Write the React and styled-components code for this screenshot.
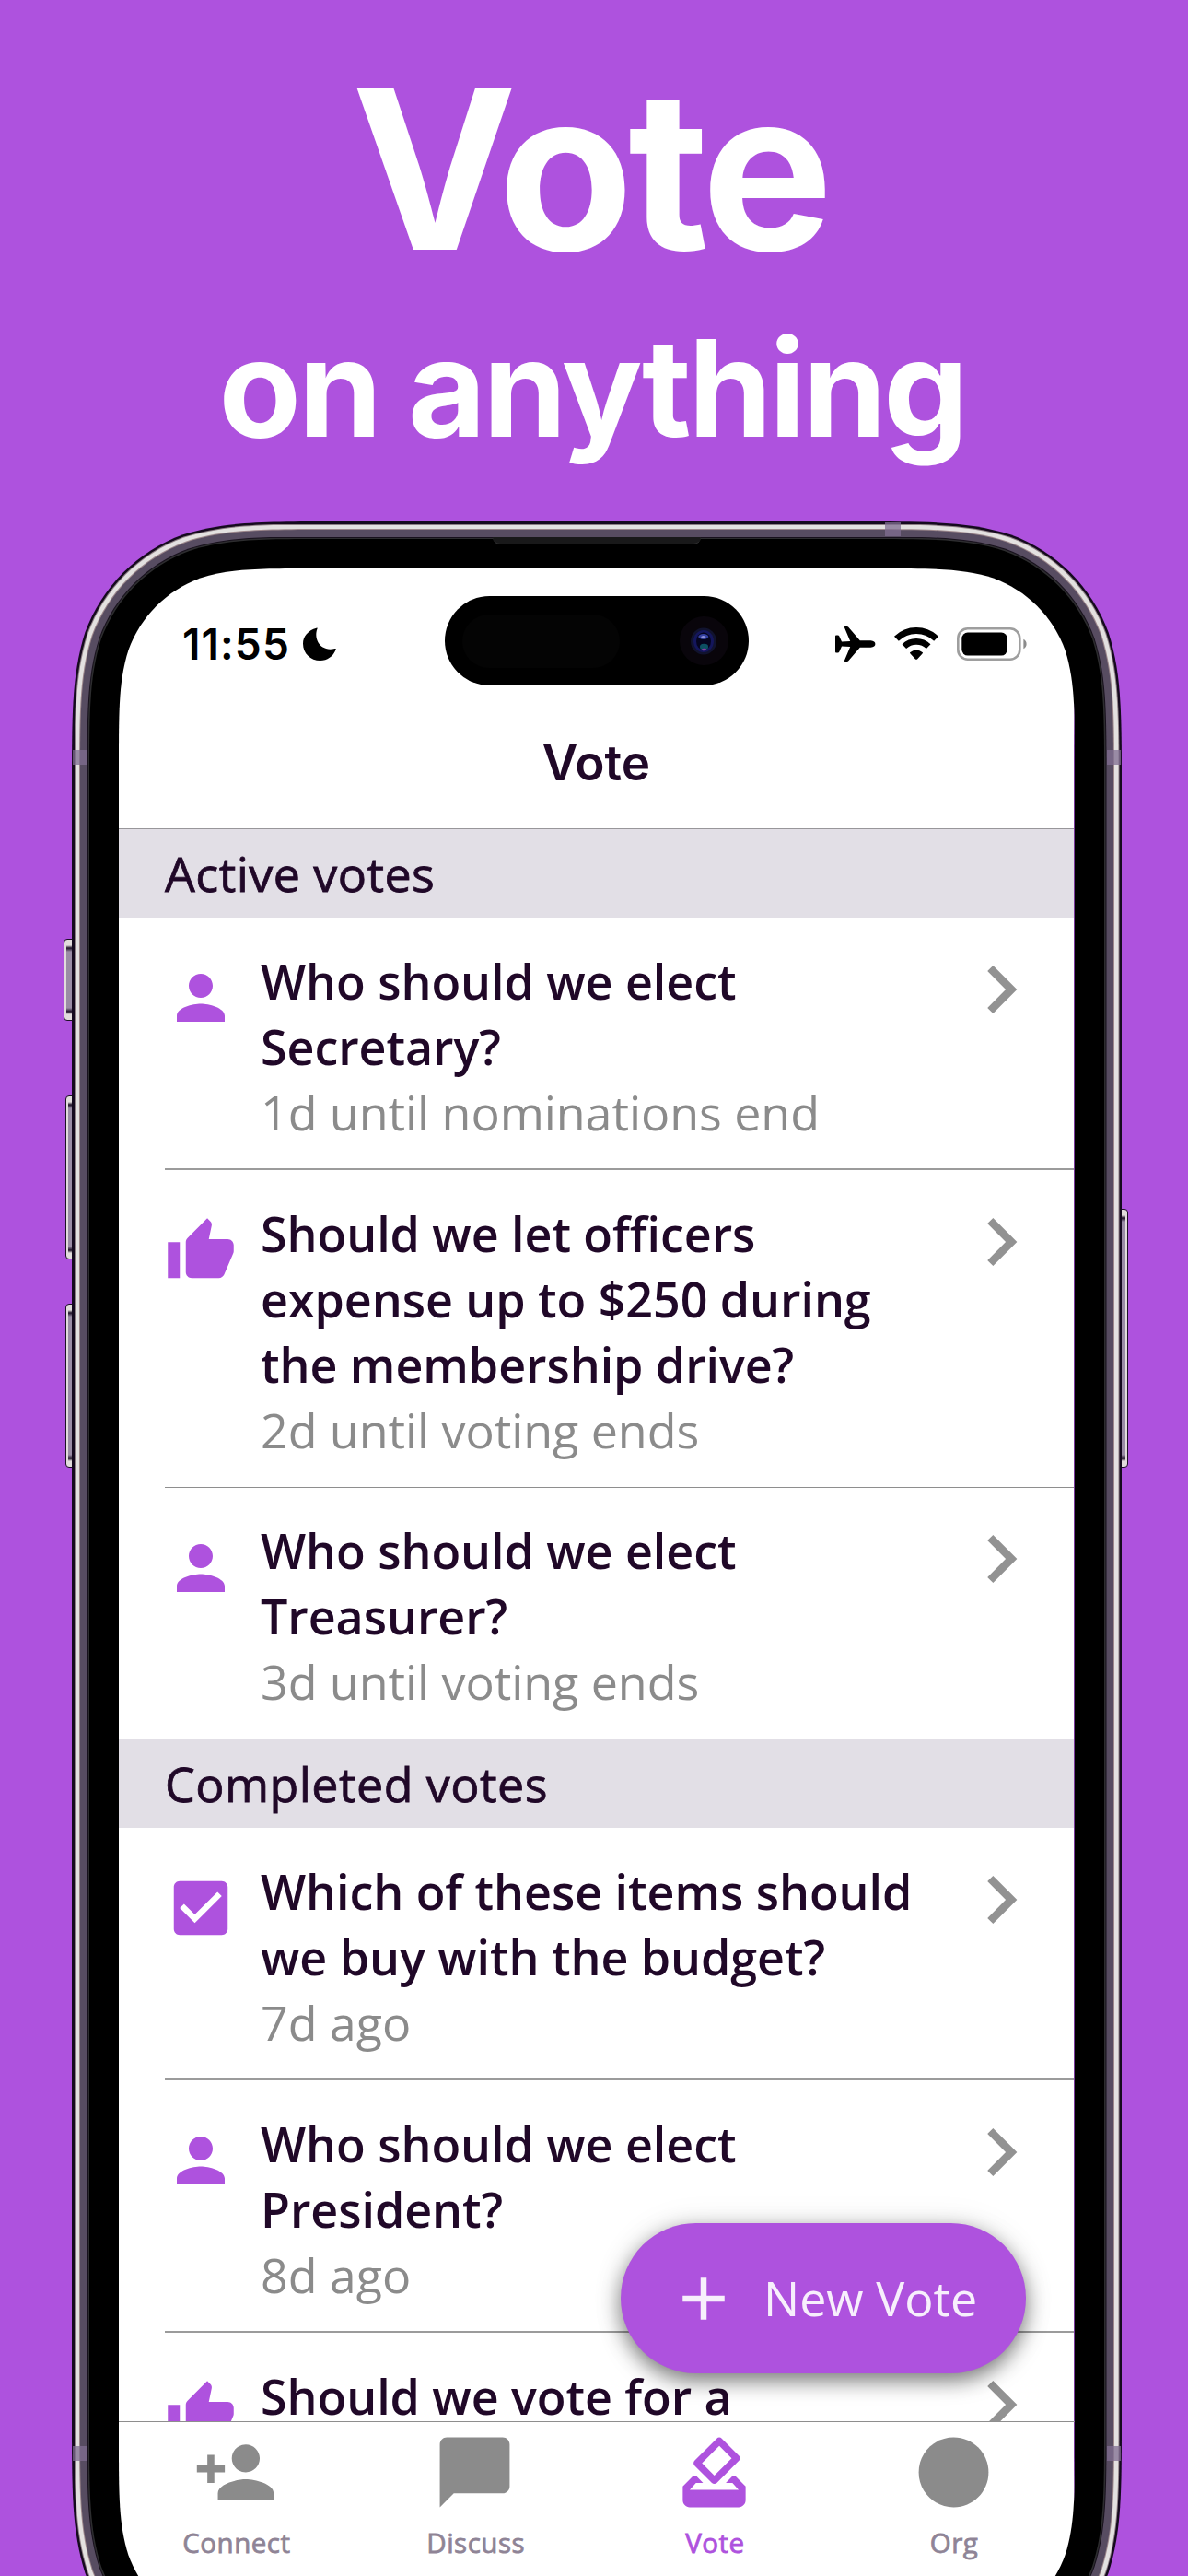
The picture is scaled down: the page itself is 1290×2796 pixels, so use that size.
import React from "react";
import styled, { createGlobalStyle } from "styled-components";

const PURPLE = "#ae52de";
const INK = "#200828";
const GREY = "#8b8b8b";

const Global = createGlobalStyle`
  html, body { margin: 0; padding: 0; background: ${PURPLE}; }
  * { box-sizing: border-box; }
`;

/* Continuous-curvature rounded rectangle, as used for phone corners. */
function squircle(w, h, r) {
  const c = (x, y, fx, fy) =>
    `${(fx ? w - x * r : x * r).toFixed(2)} ${(fy ? h - y * r : y * r).toFixed(2)}`;
  const pts = [
    [0, 1.528665], [0, 1.088493], [0, 0.868407], [0.074912, 0.631494],
    [0.16906, 0.372824], [0.372824, 0.16906], [0.631494, 0.074912],
    [0.868407, 0], [1.088493, 0], [1.528665, 0],
  ];
  const corner = (fx, fy, reverse) => {
    const p = (reverse ? [...pts].reverse() : pts).map(([x, y]) => c(x, y, fx, fy));
    return `${p[0]} C${p[1]} ${p[2]} ${p[3]} C${p[4]} ${p[5]} ${p[6]} C${p[7]} ${p[8]} ${p[9]}`;
  };
  return `M${corner(0, 0, false)} L${corner(1, 0, true)} L${corner(1, 1, false)} L${corner(0, 1, true)} Z`;
}

const PHONE_W = 1140;
const PHONE_H = 2347;
const PHONE_R = 191;

const Page = styled.main`
  width: 1290px;
  height: 2796px;
  overflow: hidden;
  background: ${PURPLE};
  display: flex;
  flex-direction: column;
  align-items: center;
`;

const Hero = styled.header`
  height: 566px;
  flex: none;
  padding-top: 40px;
  display: flex;
  flex-direction: column;
  align-items: center;
  color: #fff;
  font-family: Inter, "Liberation Sans", sans-serif;
  font-weight: 700;
  white-space: nowrap;
`;

const HeroTitle = styled.h1`
  margin: 0 9px 0 0;
  font-size: 240px;
  line-height: 288px;
  letter-spacing: -5.8px;
  font-weight: 700;
`;

const HeroSubtitle = styled.p`
  margin: -2px 4px 0 0;
  font-size: 146px;
  line-height: 190px;
  letter-spacing: -3.2px;
`;

const Phone = styled.div`
  position: relative;
  width: ${PHONE_W}px;
  height: ${PHONE_H}px;
  flex: none;
  margin-left: 6px;
`;

const Ring = styled.div`
  width: ${(p) => PHONE_W - 2 * p.$at}px;
  height: ${(p) => PHONE_H - 2 * p.$at}px;
  padding: ${(p) => p.$pad}px;
  background: ${(p) => p.$color};
  clip-path: path("${(p) => squircle(PHONE_W - 2 * p.$at, PHONE_H - 2 * p.$at, PHONE_R - p.$at)}");
`;

const SideButton = styled.span`
  position: absolute;
  top: ${(p) => p.$top}px;
  height: ${(p) => p.$h}px;
  width: 20px;
  ${(p) => (p.$right ? `right: -7px;` : `left: -${p.$out}px;`)}
  border-radius: 4px;
  border: 1.5px solid #1d1026;
  background: linear-gradient(#e2dcdc 0 6px, #1d1026 9px, #9a8ca5 13px, #9a8ca5 calc(100% - 13px), #1d1026 calc(100% - 9px), #e2dcdc calc(100% - 6px));
  box-shadow: inset ${(p) => (p.$right ? -2 : 2)}px 0 0 #e2dcdc;
`;

const Band = styled.span`
  position: absolute;
  background: #806d91;
  opacity: 0.75;
  ${(p) => p.$pos}
`;

const Speaker = styled.span`
  position: absolute;
  top: 17px;
  left: 457px;
  width: 226px;
  height: 8px;
  background: #19191a;
  border-bottom: 1px solid #353536;
  border-radius: 0 0 8px 8px;
`;

const Screen = styled.section`
  height: 100%;
  border-right: 1px solid #7a3a9c;
  background: #fff;
  display: flex;
  flex-direction: column;
  font-family: "Open Sans", "Noto Sans", sans-serif;
  color: ${INK};
`;

const StatusBar = styled.div`
  height: 150px;
  flex: none;
  display: flex;
  align-items: center;
  padding: 0 50px;
`;

const StatusSide = styled.div`
  flex: 1;
  display: flex;
  align-items: center;
  gap: ${(p) => p.$gap}px;
  padding-top: 14px;
  justify-content: ${(p) => (p.$end ? "flex-end" : "flex-start")};
`;

const Clock = styled.span`
  margin-left: 19px;
  font: 600 46px/54px Inter, sans-serif;
  letter-spacing: 1.1px;
  color: #000;
`;

const Island = styled.div`
  width: 330px;
  height: 97px;
  margin-top: 7px;
  flex: none;
  border-radius: 49px;
  background: #000;
  display: flex;
  align-items: center;
  justify-content: space-between;
  padding: 0 22px 0 19px;
`;

const Sensor = styled.span`
  width: 171px;
  height: 58px;
  border-radius: 29px;
  background: #040404;
`;

const Camera = styled.span`
  width: 53px;
  height: 53px;
  border-radius: 50%;
  background: #09050b;
  display: flex;
  align-items: center;
  justify-content: center;
`;

const NavTitle = styled.h2`
  margin: 0;
  height: 132px;
  flex: none;
  padding-top: 29px;
  text-align: center;
  font: 600 53px/64px Inter, sans-serif;
`;

const List = styled.div`
  position: relative;
  height: 1729px;
  flex: none;
  overflow: hidden;
`;

const SectionHeader = styled.h3`
  margin: 0;
  height: 97px;
  padding: 13px 50px 0;
  background: #e2dfe6;
  font-size: 52px;
  line-height: 71px;
  font-weight: 400;
  letter-spacing: 0.45px;
  -webkit-text-stroke: 0.8px ${INK};
  box-shadow: ${(p) => (p.$lined ? "inset 0 1px 0 #98969a" : "none")};
`;

const Row = styled.article`
  display: flex;
  margin-left: 50px;
  padding: 32.8px 27px 26.5px 0;
  border-bottom: ${(p) => p.$line}px solid ${(p) => (p.$line > 1 ? "#9b9b9b" : "#8e8e8e")};
`;

const RowIcon = styled.svg`
  width: 78px;
  height: 78px;
  flex: none;
  margin: 15.5px 26px 0 0;
  fill: ${PURPLE};
`;

const RowText = styled.div`
  flex: 1;
  font-size: 52px;
  line-height: 71px;
  letter-spacing: -0.06px;
  white-space: pre-line;
`;

const Question = styled.div`
  font-weight: 600;
`;

const Meta = styled.div`
  color: ${GREY};
`;

const Chevron = styled.svg`
  width: 104px;
  height: 104px;
  flex: none;
  margin-top: -7px;
  fill: #929292;
`;

const Fab = styled.button`
  position: absolute;
  right: 52px;
  bottom: 52px;
  width: 440px;
  height: 163px;
  padding: 0 0 0 51px;
  border: 0;
  border-radius: 82px;
  background: ${PURPLE};
  color: #f7effc;
  display: flex;
  align-items: center;
  gap: 26px;
  font: 400 52px/71px "Open Sans", "Noto Sans", sans-serif;
  box-shadow: 0 8px 22px rgba(0, 0, 0, 0.5), 0 0 36px rgba(0, 0, 0, 0.08);
`;

const FabIcon = styled.svg`
  width: 78px;
  height: 78px;
  fill: #f7effc;
`;

const FabLabel = styled.span`
  margin-top: -2px;
`;

const TabBar = styled.nav`
  width: 1042px;
  margin-left: -3px;
  flex: 1;
  padding: 9px 3px 0 0;
  border-top: 1px solid #8e8e8e;
  display: flex;
`;

const Tab = styled.a`
  flex: 1;
  display: flex;
  flex-direction: column;
  align-items: center;
  color: ${(p) => (p.$active ? PURPLE : "#8f8496")};
  font-size: 29.5px;
  line-height: 40px;
  font-weight: 400;
  letter-spacing: 0.5px;
  -webkit-text-stroke: 0.8px currentColor;
`;

const TabIcon = styled.svg`
  width: 91px;
  height: 91px;
  margin-bottom: 11px;
  fill: ${(p) => (p.$active ? PURPLE : GREY)};
  -webkit-text-stroke: 0;
`;

const TabLabel = styled.span`
  padding-left: 2px;
`;

const PATHS = {
  person:
    "M12 12c2.21 0 4-1.79 4-4s-1.79-4-4-4-4 1.79-4 4 1.79 4 4 4zm0 2c-2.67 0-8 1.34-8 4v2h16v-2c0-2.66-5.33-4-8-4z",
  thumb:
    "M1 21h4V9H1v12zm22-11c0-1.1-.9-2-2-2h-6.31l.95-4.57.03-.32c0-.41-.17-.79-.44-1.06L14.17 1 7.59 7.59C7.22 7.95 7 8.45 7 9v10c0 1.1.9 2 2 2h9c.83 0 1.54-.5 1.84-1.22l3.02-7.05c.09-.23.14-.47.14-.73v-2z",
  check:
    "M19 3H5c-1.11 0-2 .9-2 2v14c0 1.1.89 2 2 2h14c1.11 0 2-.9 2-2V5c0-1.1-.89-2-2-2zm-9 14l-5-5 1.41-1.41L10 14.17l7.59-7.59L19 8l-9 9z",
  chevron: "M10 6L8.59 7.41 13.17 12l-4.58 4.59L10 18l6-6z",
  add: "M19 13h-6v6h-2v-6H5v-2h6V5h2v6h6v2z",
  connect:
    "M15 12c2.21 0 4-1.79 4-4s-1.79-4-4-4-4 1.79-4 4 1.79 4 4 4zm-9-2V7H4v3H1v2h3v3h2v-3h3v-2H6zm9 4c-2.67 0-8 1.34-8 4v2h16v-2c0-2.66-5.33-4-8-4z",
  discuss: "M20 2H4c-1.1 0-2 .9-2 2v18l4-4h14c1.1 0 2-.9 2-2V4c0-1.1-.9-2-2-2z",
  vote:
    "M18 13h-.68l-2 2h1.91L19 17H5l1.78-2h2.05l-2-2H6l-3 3v4c0 1.1.89 2 1.99 2H19c1.1 0 2-.89 2-2v-4l-3-3zm-1-5.05l-4.95 4.95-3.54-3.54 4.95-4.95L17 7.95zm-4.24-5.66L6.39 8.66c-.39.39-.39 1.02 0 1.41l4.95 4.95c.39.39 1.02.39 1.41 0l6.36-6.36c.39-.39.39-1.02 0-1.41L14.16 2.3c-.38-.4-1.01-.4-1.4-.01z",
  org: "M12 2C6.47 2 2 6.47 2 12s4.47 10 10 10 10-4.47 10-10S17.53 2 12 2z",
};

const ACTIVE = [
  { icon: "person", q: "Who should we elect\nSecretary?", meta: "1d until nominations end", line: 2 },
  { icon: "thumb", q: "Should we let officers\nexpense up to $250 during\nthe membership drive?", meta: "2d until voting ends", line: 1 },
  { icon: "person", q: "Who should we elect\nTreasurer?", meta: "3d until voting ends", line: 0 },
];

const COMPLETED = [
  { icon: "check", q: "Which of these items should\nwe buy with the budget?", meta: "7d ago", line: 2 },
  { icon: "person", q: "Who should we elect\nPresident?", meta: "8d ago", line: 2 },
  { icon: "thumb", q: "Should we vote for a", line: 0 },
];

const TABS = [
  { icon: "connect", label: "Connect" },
  { icon: "discuss", label: "Discuss" },
  { icon: "vote", label: "Vote", active: true },
  { icon: "org", label: "Org" },
];

const RINGS = [
  [0, 2.5, "#150a1e"],
  [2.5, 1, "#8d7f84"],
  [3.5, 4.5, "#e3e1e0"],
  [8, 1, "#9d888c"],
  [9, 7.5, "#574c61"],
  [16.5, 1, "#17101c"],
  [17.5, 1.5, "#2d2d2f"],
  [19, 32, "#000"],
];

function Frame({ level = 0, children }) {
  if (level === RINGS.length) {
    return <Ring $at={51} $pad={0} $color="#fff">{children}</Ring>;
  }
  const [at, pad, color] = RINGS[level];
  return (
    <Ring $at={at} $pad={pad} $color={color}>
      <Frame level={level + 1}>{children}</Frame>
    </Ring>
  );
}

function VoteRow({ item }) {
  return (
    <Row $line={item.line}>
      <RowIcon viewBox="0 0 24 24"><path d={PATHS[item.icon]} /></RowIcon>
      <RowText>
        <Question>{item.q}</Question>
        {item.meta && <Meta>{item.meta}</Meta>}
      </RowText>
      <Chevron viewBox="0 0 24 24"><path d={PATHS.chevron} /></Chevron>
    </Row>
  );
}

function Moon() {
  return (
    <svg width="36" height="36" viewBox="0 0 36 36">
      <path d="M14.6.8C15.3.3 15.9.8 15.5 1.6 11.2 12.500 19 27 34.500 23 35.600 22.700 36 23.300 35.600 24.200 32.700 31.400 26.300 36 18.700 36 8.300 36 0 28.200 0 17.700 0 9.900 5.400 3.300 14.600.8Z" />
    </svg>
  );
}

function Plane() {
  return (
    <svg width="44" height="38" viewBox="0 0 44 38">
      <path d="M0 10.600Q0 9.600 1 9.600H2.800Q3.800 9.600 4.300 10.600L7 16.500L16.200 16L10 1.300Q9.500 0 10.800 0H12.800Q13.700 0 14.300.8L26.800 15.300H38.500Q43.400 15.700 43.400 19T38.500 22.700H26.800L14.300 37.200Q13.700 38 12.800 38H10.800Q9.500 38 10 36.700L16.200 22L7 21.500L4.300 27.400Q3.800 28.400 2.800 28.400H1Q0 28.400 0 27.400Z" />
    </svg>
  );
}

function Wifi() {
  return (
    <svg width="48" height="36" viewBox="0 0 48 36" fill="none" stroke="#000">
      <path d="M2.400 12.300A31 31 0 0 1 45.600 12.300" strokeWidth="7" />
      <path d="M10.800 20.700A19 19 0 0 1 37.200 20.700" strokeWidth="6.600" />
      <path d="M17 27.200Q24 21.600 31 27.200Q31 28 30.300 28.700L25 34.400Q24 35.300 23 34.400L17.700 28.700Q17 28 17 27.200Z" fill="#000" stroke="none" />
    </svg>
  );
}

function Battery() {
  return (
    <svg width="77" height="37" viewBox="0 0 77 37">
      <rect x="1.300" y="1.300" width="67" height="33.400" rx="10.500" fill="none" stroke="#9e9e9e" strokeWidth="2.600" />
      <rect x="5.300" y="5.600" width="49.500" height="25" rx="6.500" />
      <path d="M72.400 12.800Q75.600 14.500 75.600 18T72.400 23.200Z" fill="#8c8c8c" />
    </svg>
  );
}

function Lens() {
  return (
    <svg width="28" height="30" viewBox="0 0 28 30">
      <ellipse cx="14" cy="15" rx="14" ry="14.500" fill="#11132e" />
      <ellipse cx="14" cy="15" rx="11" ry="12" fill="#14165c" />
      <ellipse cx="14" cy="15" rx="8" ry="9.500" fill="#05051f" />
      <ellipse cx="13.800" cy="10" rx="5.500" ry="3" fill="#3440a0" />
      <ellipse cx="13.800" cy="10.500" rx="2.600" ry="1.500" fill="#8e8fd8" />
      <ellipse cx="14.500" cy="21" rx="4.600" ry="3.300" fill="#0c4f62" />
      <ellipse cx="14.500" cy="24" rx="2.600" ry="1.300" fill="#8b3aa8" />
    </svg>
  );
}

export default function App() {
  return (
    <>
      <Global />
      <Page>
        <Hero>
          <HeroTitle>Vote</HeroTitle>
          <HeroSubtitle>on anything</HeroSubtitle>
        </Hero>
        <Phone>
          <SideButton $top={453} $h={89} $out={9.5} />
          <SideButton $top={623} $h={178} $out={7} />
          <SideButton $top={849} $h={178} $out={7} />
          <SideButton $top={746} $h={281} $right />
          <Frame>
            <Screen>
              <StatusBar>
                <StatusSide $gap={14}>
                  <Clock>11:55</Clock>
                  <Moon />
                </StatusSide>
                <Island>
                  <Sensor />
                  <Camera><Lens /></Camera>
                </Island>
                <StatusSide $gap={20} $end>
                  <Plane />
                  <Wifi />
                  <Battery />
                </StatusSide>
              </StatusBar>
              <NavTitle>Vote</NavTitle>
              <List>
                <SectionHeader $lined>Active votes</SectionHeader>
                {ACTIVE.map((v) => (
                  <VoteRow key={v.q} item={v} />
                ))}
                <SectionHeader>Completed votes</SectionHeader>
                {COMPLETED.map((v) => (
                  <VoteRow key={v.q} item={v} />
                ))}
                <Fab>
                  <FabIcon viewBox="0 0 24 24"><path d={PATHS.add} /></FabIcon>
                  <FabLabel>New Vote</FabLabel>
                </Fab>
              </List>
              <TabBar>
                {TABS.map((t) => (
                  <Tab key={t.label} $active={t.active}>
                    <TabIcon $active={t.active} viewBox="0 0 24 24"><path d={PATHS[t.icon]} /></TabIcon>
                    <TabLabel>{t.label}</TabLabel>
                  </Tab>
                ))}
              </TabBar>
            </Screen>
          </Frame>
          <Speaker />
          <Band $pos="top: 1px; left: 883px; width: 17px; height: 15px;" />
          <Band $pos="top: 248px; left: 1px; width: 15px; height: 16px;" />
          <Band $pos="top: 248px; right: 1px; width: 15px; height: 16px;" />
          <Band $pos="top: 2089px; left: 1px; width: 15px; height: 16px;" />
          <Band $pos="top: 2089px; right: 1px; width: 15px; height: 16px;" />
        </Phone>
      </Page>
    </>
  );
}
